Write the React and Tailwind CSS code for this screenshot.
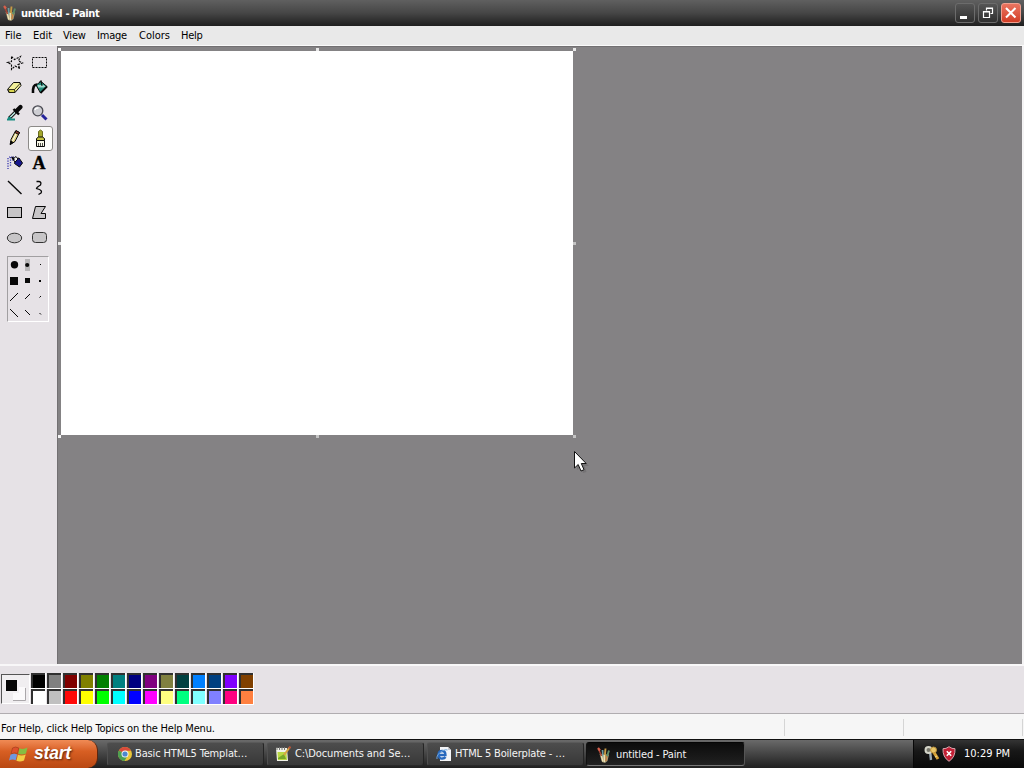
import React from "react";

const INK = "#080808";

function PaintIcon({ className = "" }) {
  return (
    <svg viewBox="0 0 16 16" className={"h-4 w-4 shrink-0 " + className}>
      <path d="M3.5 7 L13 7.5 L11.5 14 L9 16 L6 15 Z" fill="#a39a76" />
      <path d="M2.5 2 L6 10" stroke="#a84434" strokeWidth="1.6" />
      <path d="M2 1 L4 3.5" stroke="#d8604c" strokeWidth="2.2" />
      <path d="M6.5 3 L7 10" stroke="#6d9ba0" strokeWidth="1.7" />
      <path d="M9.5 1.5 L8.7 10" stroke="#c79a44" strokeWidth="1.9" />
      <path d="M13 3.5 L10.8 10" stroke="#5d8d68" strokeWidth="1.9" />
      <path d="M5.5 9 L6.8 14.5 M8.2 8 L8.4 15" stroke="#efe3b5" strokeWidth="1.4" />
      <path d="M10.8 9 L9.9 14" stroke="#c98342" strokeWidth="1.4" />
    </svg>
  );
}

function Tool({ children, selected }) {
  return (
    <div className={"flex h-[25px] w-[25px] items-center justify-center " + (selected ? "rounded-[3px] border border-[#8c8a88] bg-[#fdfdfc]" : "")}>
      <svg viewBox="0 0 25 25" className="h-[25px] w-[25px] shrink-0" fill="none" stroke={INK} strokeWidth="1">
        {children}
      </svg>
    </div>
  );
}

function Toolbox() {
  return (
    <div className="grid grid-cols-[25px_25px] pl-[3px] pt-[5px]">
      <Tool>
        <path d="M8.5 5.5 L11.5 8.5 L17.5 5.5 L15.5 10 L19.5 12 L15 13.5 L17 17.5 L12 15 L8.5 18.5 L8.5 13.5 L4.5 11.5 L8.5 10.5 Z" strokeDasharray="2.2 1.1" strokeWidth="1.1" />
      </Tool>
      <Tool>
        <rect x="4.5" y="6.5" width="14" height="10" strokeDasharray="2 1" />
      </Tool>
      <Tool>
        <path d="M4.5 13.5 L10.5 6.5 L17 6.5 L18 9.5 L12 16.5 L6 16.5 Z" fill="#f1ef9a" />
        <path d="M5.5 13.5 L11.5 13.5 L12 16.5 L6 16.5 Z" fill="#d8d44f" strokeWidth=".8" />
        <path d="M11.5 13.5 L17.5 7" strokeWidth=".8" />
      </Tool>
      <Tool>
        <path d="M8 9 L13 5.5 L19 10.5 L12.5 17 Z" fill="#238b7b" />
        <path d="M9.5 9 L15.5 9 L17.5 10.5 L16 11.5 L10 11.5 Z" fill="#9ed8cb" stroke="none" />
        <path d="M14 10 L13 4.5 L11.5 6" />
        <path d="M9 8.5 Q4.5 8.5 5 17" strokeWidth="2.6" />
        <path d="M12.5 17 L19 10.5" strokeWidth="1.8" />
      </Tool>
      <Tool>
        <path d="M6 17.5 L13.5 10" strokeWidth="3.4" />
        <path d="M6.5 17 L13 10.5" stroke="#bce8e2" strokeWidth="1.6" />
        <path d="M10.5 8 L16 13.5" strokeWidth="2.4" />
        <path d="M13.5 10 L17.5 6" strokeWidth="4.3" strokeLinecap="round" />
        <path d="M4 18.5 L12 18.5 M5 16.8 L8 16.8" stroke="#188b80" strokeWidth="1.8" />
      </Tool>
      <Tool>
        <path d="M14 14 L18.5 18.5" stroke="#25249a" strokeWidth="3" />
        <circle cx="9.8" cy="9.8" r="5" fill="#cdcdd2" stroke="#4b4b53" strokeWidth="1.3" />
        <path d="M7 9 Q7.5 6.5 10.5 7" stroke="#fff" strokeWidth="1.5" />
      </Tool>
      <Tool>
        <path d="M7.5 18.5 L8 13.5 L12.5 5 L16.5 6.5 L12 15.5 Z" fill="#e0d17f" />
        <path d="M13 4.5 L16.5 6.5 L15.5 8.5 L12 6.5 Z" fill="#8f3931" />
        <path d="M13 8 L9.5 15" stroke="#fff" />
        <path d="M7 18.5 L8 15 L10 16.5 Z" fill={INK} />
      </Tool>
      <Tool selected>
        <path d="M10.5 11.5 V5.5 Q12.5 2.5 14.5 5.5 V11.5 Z" fill="#a3a72c" stroke="#6a6d22" />
        <path d="M8.5 14.5 V12.5 L10.5 11 H14.5 L16.5 12.5 V14.5 Z" fill="#c3c240" />
        <path d="M8.5 14.5 H16.5 V20.5 H8.5 Z" fill="#f8f8e8" />
        <path d="M10.5 17 V20 M12.5 17 V20 M14.5 17 V20" strokeWidth=".7" />
      </Tool>
      <Tool>
        <path d="M5 7 V18 M7.5 6 V15 M10 6 V10" stroke="#3736ad" strokeWidth="1.3" strokeDasharray="1.3 1.2" />
        <path d="M6 6 L11 6" stroke="#3736ad" strokeDasharray="1 1" />
        <path d="M12.5 8 L16 7 L19.5 12 L16.5 16 L11.5 12.5 Z" fill="#17178d" />
        <path d="M10 8 L13 5.5 L15 8 L12 11 Z" fill="#f0f0ef" />
        <path d="M9 6 L11 9" strokeWidth="2" />
      </Tool>
      <div className="flex h-[25px] w-[25px] items-center justify-center pr-[3px] pb-[2px] font-['Liberation_Serif',serif] text-[18px] leading-none font-bold text-black [-webkit-text-stroke:0.4px_black]">A</div>
      <Tool>
        <path d="M5 5 L18.5 18" strokeWidth="1.4" />
      </Tool>
      <Tool>
        <path d="M8.5 5.5 H11 Q13.8 6 12.5 9 Q8.5 11.5 8.5 12.5 L11.5 13.5 Q14.5 15 13 17 L10.5 18.5" strokeWidth="1.3" />
      </Tool>
      <Tool>
        <rect x="4.5" y="6.5" width="14" height="10" fill="#c7c5c7" />
      </Tool>
      <Tool>
        <path d="M7.5 5.5 H17.5 L13 12.5 H17.5 V17.5 H4.5 Z" fill="#c7c5c7" />
      </Tool>
      <Tool>
        <ellipse cx="11.5" cy="12" rx="7.2" ry="4.8" fill="#c7c5c7" stroke="#333" />
      </Tool>
      <Tool>
        <rect x="4.5" y="6.5" width="14" height="10" rx="3" fill="#c7c5c7" stroke="#333" />
      </Tool>
    </div>
  );
}

function BrushSizes() {
  return (
    <div className="mt-[5px] ml-[7px] h-[66px] w-[42px] border border-t-[#a19fa1] border-r-white border-b-white border-l-[#a19fa1]">
      <svg viewBox="0 0 40 64" className="h-[64px] w-[40px]" fill={INK} stroke="none">
        <rect x="17" y="2" width="5" height="12" fill="#b9b7b9" />
        <circle cx="6.5" cy="7.8" r="3.7" />
        <circle cx="19.2" cy="8" r="2.1" />
        <rect x="32" y="7" width="1" height="1" />
        <rect x="2" y="20" width="8" height="8" />
        <rect x="17" y="21" width="5" height="5" />
        <rect x="31" y="23" width="2" height="2" />
        <g stroke={INK} strokeWidth="1">
          <path d="M2 44 L10 36 M17 42 L22 37 M31.5 40.5 L33 39" />
          <path d="M2 52 L10 60 M17 53 L22 58 M31.5 56 L33 57.5" />
        </g>
      </svg>
    </div>
  );
}

const COLORS = [
  ["#000000", "#ffffff"], ["#808080", "#c0c0c0"], ["#800000", "#ff0808"], ["#808000", "#ffff00"],
  ["#008000", "#00ff00"], ["#008080", "#00ffff"], ["#000080", "#0000ff"], ["#800080", "#ff00ff"],
  ["#808040", "#ffff80"], ["#004040", "#00ff80"], ["#0080ff", "#80ffff"], ["#004080", "#8080ff"],
  ["#8000ff", "#ff0080"], ["#804000", "#ff8040"],
];

function Palette() {
  return (
    <div className="flex h-[49px] items-start border-t-2 border-[#f8f7f8] bg-[#e6e2e6] pt-[7px]">
      <div className="ml-px mt-[1px] h-[30px] w-[29px] border border-t-[#555] border-r-white border-b-white border-l-[#555] bg-[#f0eef0]">
        <svg viewBox="0 0 27 28" className="h-[28px] w-[27px]">
          <path d="M11 25.5 H23.5 V13" fill="none" stroke="#aaa7aa" />
          <rect x="11" y="12" width="12" height="13" fill="#fbfafb" />
          <rect x="3" y="4" width="14" height="14" fill="#f2f0f2" />
          <rect x="4" y="5" width="11" height="11" fill="#050505" />
        </svg>
      </div>
      <div className="flex">
        {COLORS.map((pair, i) => (
          <div key={i} className="w-[16px]">
            {pair.map((c) => (
              <div key={c} className="h-[16px] border-r border-b border-white pl-px">
                <div className="h-full border-t-2 border-l-2 border-t-[#303030] border-l-[#303030]" style={{ backgroundColor: c }} />
              </div>
            ))}
          </div>
        ))}
      </div>
    </div>
  );
}

function Handle({ className }) {
  return <span className={"absolute h-[3px] w-[3px] " + className} />;
}

function Workspace() {
  return (
    <div className="relative flex-1 overflow-hidden border-t border-l border-[#727072] bg-[#848284]">
      <div className="mt-[4px] ml-[3px] h-[384px] w-[512px] bg-white" />
      <Handle className="top-[1px] left-[0px] bg-white" />
      <Handle className="top-[1px] left-[258px] bg-[#e8e8e8]" />
      <Handle className="top-[1px] left-[515px] bg-[#e8e8e8]" />
      <Handle className="top-[195px] left-[0px] bg-[#e8e8e8]" />
      <Handle className="top-[195px] left-[515px] bg-[#c4c4c4]" />
      <Handle className="top-[388px] left-[0px] bg-[#f4f4f4]" />
      <Handle className="top-[388px] left-[258px] bg-[#c4c4c4]" />
      <Handle className="top-[388px] left-[515px] bg-[#c4c4c4]" />
      <svg viewBox="0 0 18 26" className="absolute top-[403px] left-[515px] h-[26px] w-[18px]">
        <path d="M4 4 V20 L7.5 17 L10 23 L13.5 22 L11.5 16 H16 Z" fill="#6b696b" opacity=".6" />
        <path d="M1.5 1.5 V18 L5.2 14.5 L8 21 L11 19.7 L8.3 13.5 H13.2 Z" fill="#fff" stroke="#111" />
      </svg>
    </div>
  );
}

function WindowButton({ close, children }) {
  return (
    <div className={"h-[20px] w-[20px] rounded-[3px] border " + (close ? "border-[#f0a090] bg-linear-to-b from-[#ea7460] to-[#d33c24]" : "border-[#6c6c6c] bg-linear-to-b from-[#555] to-[#303030]")}>
      <svg viewBox="0 0 18 18" className="h-[18px] w-[18px]" fill="none" stroke="#fff">
        {children}
      </svg>
    </div>
  );
}

function ChromeIcon() {
  return (
    <svg viewBox="0 0 16 16" className="h-4 w-4 shrink-0">
      <circle cx="8" cy="8" r="7" fill="#e9c637" />
      <path d="M8 8 L1.9 4.5 A7 7 0 0 1 14.1 4.8 L8 4.8 Z" fill="#d94a3b" />
      <path d="M8 8 L1.9 4.5 A7 7 0 0 0 7.5 15 L10.7 9.6 Z" fill="#4ba052" />
      <circle cx="8" cy="8" r="3.5" fill="#f5f5f5" />
      <circle cx="8" cy="8" r="2.6" fill="#4d87cd" />
    </svg>
  );
}

function NotepadIcon() {
  return (
    <svg viewBox="0 0 16 16" className="h-4 w-4 shrink-0">
      <path d="M1 2 H12 L13 15 H2 Z" fill="#f1f2e8" />
      <path d="M2.5 6 H11.5 L12 14 H3 Z" fill="#b9d943" />
      <path d="M3 12 L9 8 L11 13 H3 Z" fill="#77a829" />
      <path d="M2 1 V4 M4.5 1 V4 M7 1 V4 M9.5 1 V4" stroke="#777" />
      <path d="M15 1 L9 9" stroke="#d6a542" strokeWidth="2" />
      <path d="M15.5 0.5 L14 2.5" stroke="#b8503a" strokeWidth="2" />
    </svg>
  );
}

function ExplorerIcon() {
  return (
    <svg viewBox="0 0 16 16" className="h-4 w-4 shrink-0">
      <path d="M4 1 H12 L15 4 V15 H4 Z" fill="#f3f4f7" />
      <path d="M12 1 V4 H15" fill="#c8cbd2" />
      <path d="M3 9 H9.5 Q9.5 5 6.2 5 Q2.5 5 2.5 9 Q3 13 6.5 12.5 Q8.5 12.5 9.5 11" fill="none" stroke="#2768bd" strokeWidth="2.3" />
      <path d="M1 13 Q0 9 6 5 Q10 3 11.5 4" fill="none" stroke="#6ea4dc" />
    </svg>
  );
}

function Task({ icon, label, active, className, textClass }) {
  return (
    <div className={"flex h-[24px] items-center rounded-[3px] border pb-px text-[#f4f4f4] " + className + " " + (active ? "border-t-[#050505] border-r-[#555] border-b-[#777] border-l-[#111] bg-linear-to-b from-[#0c0c0c] to-[#212121] pt-[3px]" : "border-t-[#5a5a5a] border-r-[#252525] border-b-[#292929] border-l-[#505050] bg-linear-to-b from-[#4d4d4d] to-[#383838]")}>
      {icon}
      <span className={"whitespace-pre " + textClass}>{label}</span>
    </div>
  );
}

function Taskbar() {
  return (
    <div className="flex h-[29px] border-t border-[#101010] bg-linear-to-b from-[#6a6a6a] via-[#444] via-50% to-[#202020]">
      <div className="flex h-[28px] w-[98px] shrink-0 items-center rounded-r-[10px] border-r border-[#5b260f] bg-linear-to-b from-[#f08b55] via-[#d85f23] via-40% to-[#b94812] pl-[9px]">
        <svg viewBox="0 0 20 18" className="h-[18px] w-[20px]">
          <path d="M3.5 3 Q6.5 1 9.8 3 L8.5 8.5 Q5.5 7 2 9 Z" fill="#dd522c" stroke="#8a3417" strokeWidth=".5" />
          <path d="M10.5 3.2 Q14 5 18.5 2.5 L17 8.5 Q13 10.5 9.2 8.8 Z" fill="#86bd42" />
          <path d="M1.5 9.8 Q4.8 8 8.1 9.5 L6.7 15.3 Q3.5 13.5 0 15.5 Z" fill="#6f98e0" />
          <path d="M8.9 9.8 Q12.5 11.5 16.7 9.6 L15 15.5 Q11 17.4 7.4 15.7 Z" fill="#f2cd45" />
        </svg>
        <span className="ml-[5px] font-['Liberation_Sans',sans-serif] text-[17.5px] leading-none font-bold tracking-[-0.2px] text-white italic [text-shadow:1px_1px_2px_#5b260f]">start</span>
      </div>
      <div className="flex flex-1 pt-[2px]">
        <Task className="ml-[9px] w-[157px] pl-[9px]" icon={<ChromeIcon />} label="Basic HTML5 Templat…" textClass="ml-[2px] tracking-[-0.14px]" />
        <Task className="ml-[3px] w-[157px] pl-[7px]" icon={<NotepadIcon />} label="C:\Documents and Se…" textClass="ml-[4px] tracking-[-0.1px]" />
        <Task className="ml-[3px] w-[157px] pl-[8px]" icon={<ExplorerIcon />} label="HTML 5 Boilerplate - …" textClass="ml-[3px] tracking-[-0.16px]" />
        <Task active className="ml-[2px] w-[159px] pl-[9px]" icon={<PaintIcon />} label="untitled - Paint" textClass="ml-[4px] tracking-[-0.14px]" />
      </div>
      <div className="flex w-[111px] items-center border-l border-[#080808] bg-linear-to-b from-[#343434] via-[#171717] via-40% to-[#090909] pl-[10px] text-white">
        <svg viewBox="0 0 16 18" className="h-[18px] w-[16px]">
          <path d="M6 6 L7 15" stroke="#9cabb5" strokeWidth="2.4" />
          <path d="M9 6 L14 14" stroke="#d8a337" strokeWidth="3" />
          <circle cx="4.5" cy="5" r="3" fill="#77776c" stroke="#d4d5c9" strokeWidth="2" />
          <circle cx="9.5" cy="5" r="3" fill="#e8c66a" stroke="#b88f38" />
          <path d="M11 12 L13 11" stroke="#f3df9a" />
        </svg>
        <svg viewBox="0 0 14 16" className="ml-[2px] h-[16px] w-[14px]">
          <path d="M7 .7 Q10 3 13 2.7 Q13.5 11 7 15.3 Q.5 11 1 2.7 Q4 3 7 .7 Z" fill="#c31f35" stroke="#d7a6ae" />
          <path d="M4.8 5.3 L9.2 9.7 M9.2 5.3 L4.8 9.7" stroke="#fff" strokeWidth="1.6" />
        </svg>
        <span className="ml-[8px] whitespace-nowrap">10:29 PM</span>
      </div>
    </div>
  );
}

export default function App() {
  return (
    <div className="flex h-[768px] w-[1024px] flex-col overflow-hidden bg-[#e6e2e6] font-['DejaVu_Sans_Condensed','DejaVu_Sans',sans-serif] text-[11px] leading-[14px] text-black [font-stretch:condensed]">
      <div className="flex h-[26px] items-center bg-linear-to-b from-[#606060] via-[#464646] via-50% to-[#1f1f1f] pl-[2px] pr-[3px]">
        <PaintIcon />
        <span className="ml-[3px] flex-1 pt-px font-bold tracking-[-0.35px] text-white">untitled - Paint</span>
        <div className="flex gap-[3px]">
          <WindowButton><rect x="4" y="12" width="7" height="3" fill="#fff" stroke="none" /></WindowButton>
          <WindowButton>
            <path d="M7.5 6.5 V4 H13.5 V9.5 H11.5 M7 4.5 H14" strokeWidth="1.2" />
            <path d="M4.5 7.5 H10.5 V13.5 H4.5 Z M4 8 H11" strokeWidth="1.2" />
          </WindowButton>
          <WindowButton close><path d="M4 4 L13.5 13.5 M13.5 4 L4 13.5" strokeWidth="2.1" /></WindowButton>
        </div>
      </div>
      <div className="flex h-[20px] shrink-0 items-center border-b border-[#fafafa] bg-[#e9e9e9] pt-px pl-[5px]">
        <span className="w-[28px]">File</span>
        <span className="w-[30px]">Edit</span>
        <span className="w-[34px] tracking-[-0.2px]">View</span>
        <span className="w-[42px] tracking-[-0.2px]">Image</span>
        <span className="w-[42px]">Colors</span>
        <span className="tracking-[-0.3px]">Help</span>
      </div>
      <div className="flex h-[618px] shrink-0">
        <div className="w-[57px]">
          <Toolbox />
          <BrushSizes />
        </div>
        <Workspace />
        <div className="w-[2px] bg-[#f5f4f5]" />
      </div>
      <Palette />
      <div className="flex h-[26px] shrink-0 border-t border-[#b0adb0] bg-[#f6f6f6] pt-[5px]">
        <span className="w-[784px] pt-[3px] pl-px tracking-[-0.19px]">For Help, click Help Topics on the Help Menu.</span>
        <div className="h-[17px] w-[119px] border-l border-[#d5d5d5]" />
        <div className="h-[17px] w-[119px] border-l border-[#d5d5d5]" />
        <div className="h-[17px] w-[2px] border-l border-[#d5d5d5]" />
      </div>
      <Taskbar />
    </div>
  );
}
